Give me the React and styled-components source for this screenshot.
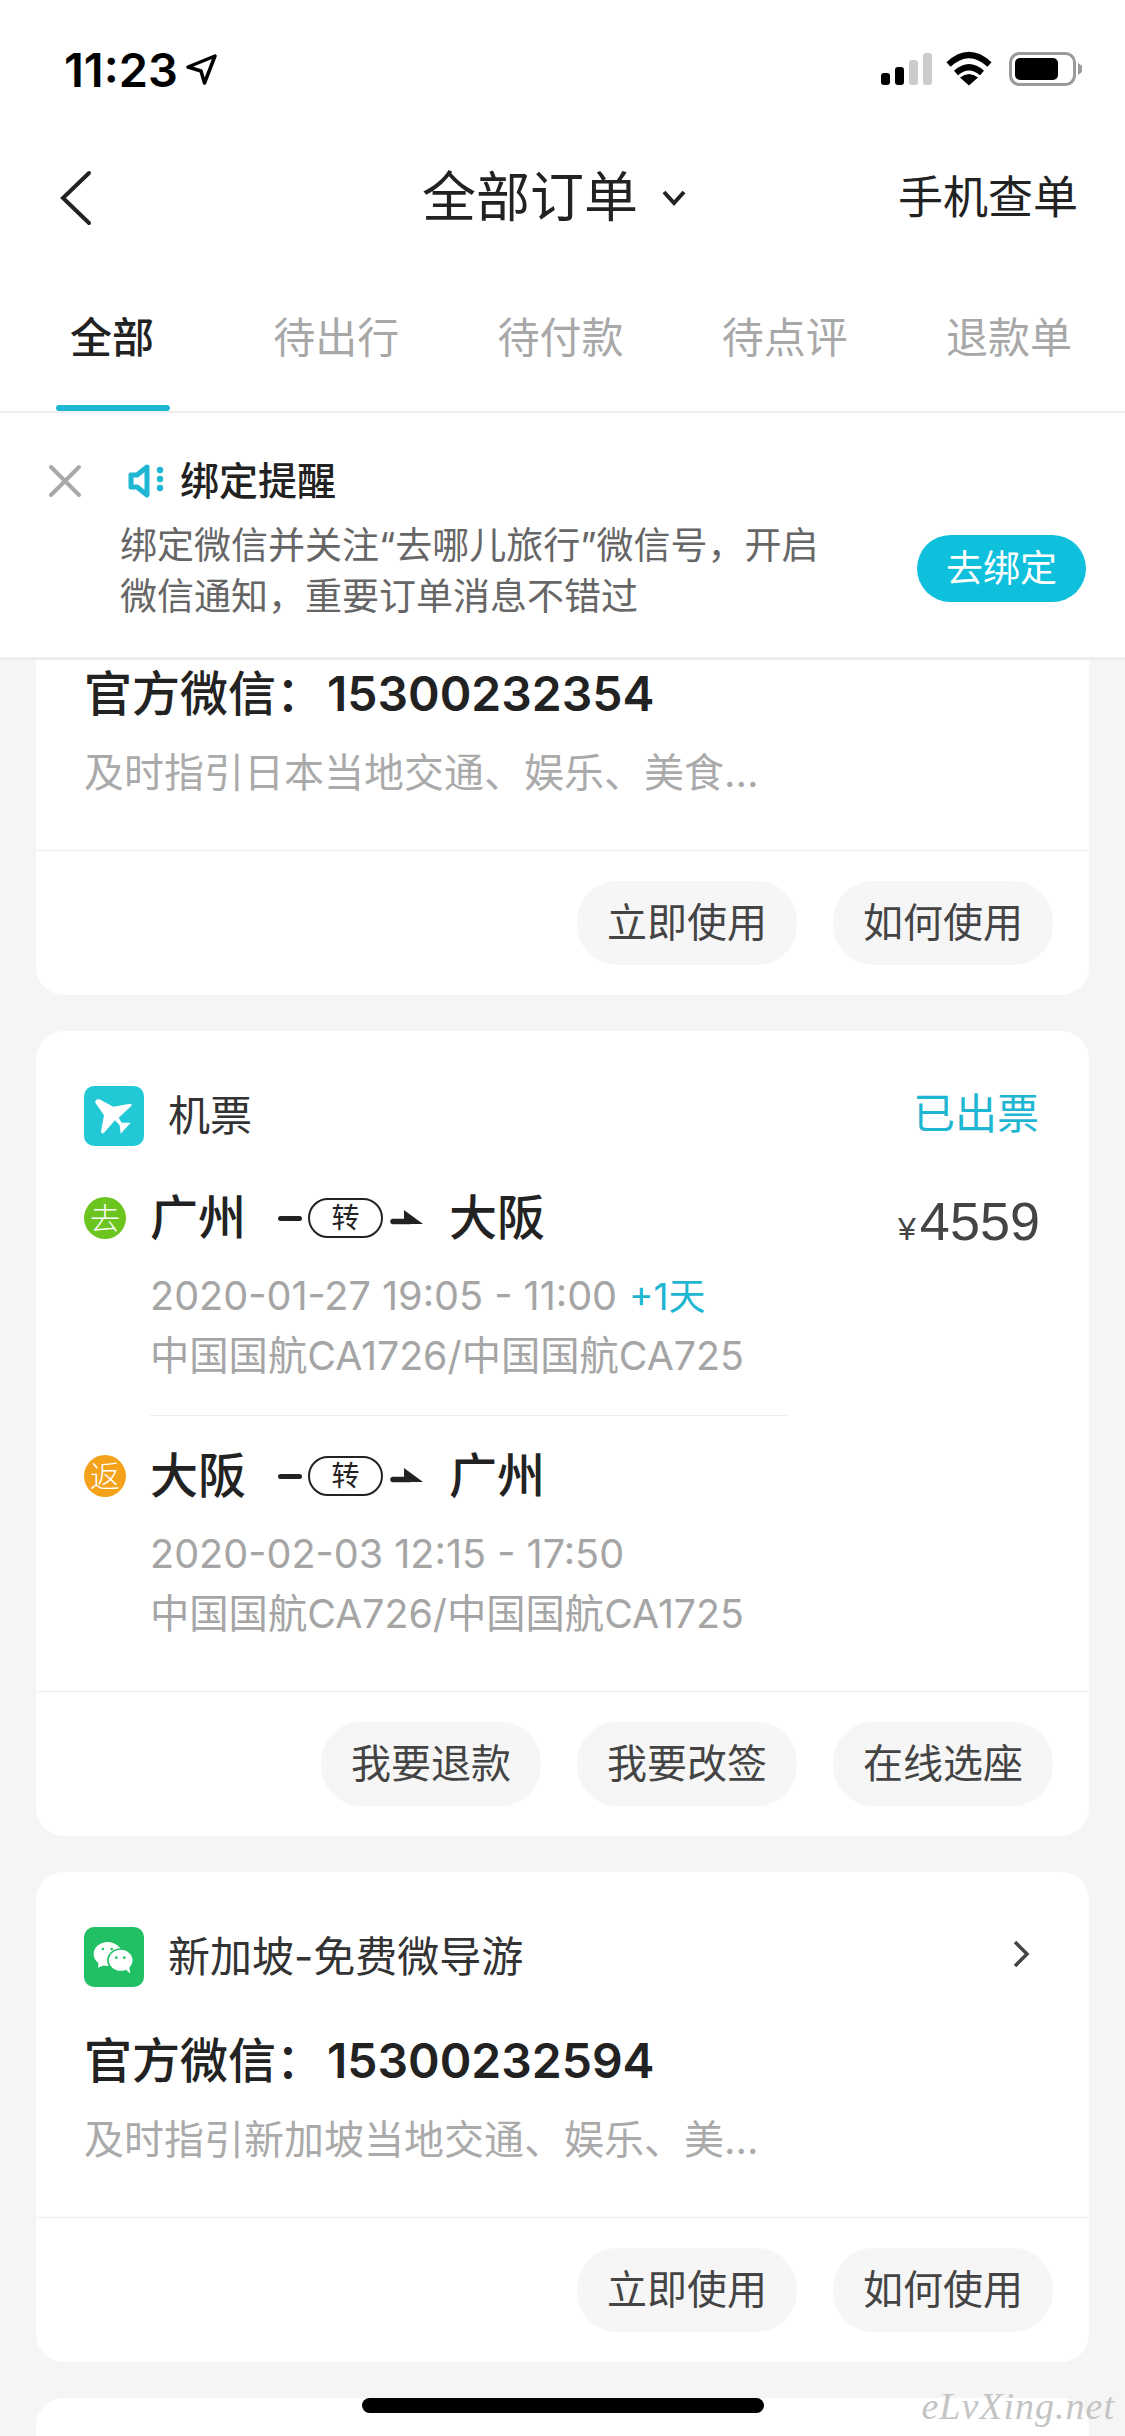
import React from 'react'
import styled, { createGlobalStyle } from 'styled-components'

const GlobalStyle = createGlobalStyle`
    html, body {
        margin: 0;
        padding: 0;
        background: #f5f5f5;
        font-family: Inter, "Noto Sans CJK SC", sans-serif;
    }
`

function SignalIcon() {
    return (
        <svg width="52" height="34" viewBox="881 52 52 34">
            <rect x="882" y="73" width="9" height="12" rx="3" fill="#000" />
            <rect x="896" y="67" width="9" height="18" rx="3" fill="#000" />
            <rect x="910" y="60" width="9" height="25" rx="3" fill="#ccc" />
            <rect x="924" y="53" width="9" height="32" rx="3" fill="#ccc" />
        </svg>
    )
}

function WifiIcon() {
    return (
        <svg width="48" height="38" viewBox="948 50 48 38">
            <path d="M950.500 64.500 Q971 45.500 991.500 64.500" fill="none" stroke="#000" strokeWidth="6" />
            <path d="M958 73 Q971 61.500 984 73" fill="none" stroke="#000" strokeWidth="6" />
            <path d="M971 85.500 L962 77.500 Q971 70.500 980 77.500 Z" fill="#000" />
        </svg>
    )
}

function BatteryIcon() {
    return (
        <svg width="75" height="36" viewBox="1008 51 75 36">
            <rect x="1010.500" y="53.500" width="64" height="31" rx="9" fill="none" stroke="#9a9a9a" strokeWidth="3" />
            <rect x="1015" y="58" width="43" height="22" rx="5" fill="#000" />
            <path d="M1078 63 L1082 66 V72 L1078 75 Z" fill="#9a9a9a" />
        </svg>
    )
}

function PlaneIcon() {
    return (
        <svg width="60" height="60" viewBox="12 12 180 180">
            <path d="M46 62 Q45 50 58 52 L100 74 L150 65 Q158 66 153 73 L116 107 L125 122 L152 122 L122 155 L119 130 L105 115 L72 152 Q64 158 63 148 L72 100 Z" fill="#fff" />
        </svg>
    )
}

function WechatIcon() {
    return (
        <svg width="60" height="60" viewBox="12 12 180 180">
            <ellipse cx="83" cy="93" rx="42" ry="36" fill="#fff" />
            <path d="M56 118 L54 134 L78 124 Z" fill="#fff" />
            <ellipse cx="122" cy="112" rx="38" ry="34" fill="#fff" stroke="#22c064" strokeWidth="5" />
            <path d="M136 138 L151 152 L147 130 Z" fill="#fff" />
            <circle cx="69" cy="78" r="4" fill="#22c064" />
            <circle cx="95" cy="78" r="4" fill="#22c064" />
            <circle cx="109" cy="104" r="4" fill="#22c064" />
            <circle cx="133" cy="104" r="4" fill="#22c064" />
        </svg>
    )
}

function TransferMark() {
    return (
        <Transfer>
            <TransferLine />
            <TransferPill>转</TransferPill>
            <svg width="34" height="18" viewBox="0 0 34 18">
                <path d="M3 12.500 H20" stroke="#222" strokeWidth="5.500" strokeLinecap="round" />
                <path d="M14 1 L33 15 H14 Z" fill="#222" />
            </svg>
        </Transfer>
    )
}

function FlightLeg({ badge, badgeColor, from, to, date, extra, carrier }) {
    return (
        <Leg>
            <Route>
                <Badge $color={badgeColor}>{badge}</Badge>
                <City>{from}</City>
                <TransferMark />
                <City>{to}</City>
            </Route>
            <LegDetail>
                <LegDate>{date}{extra && <NextDay>{extra}</NextDay>}</LegDate>
                <div>{carrier}</div>
            </LegDetail>
        </Leg>
    )
}

// the first card in the list is scrolled under the banner, so it comes without a title
function GuideCard({ title, number, desc }) {
    return (
        <Card $scrolled={!title}>
            {title && (
                <CardHead>
                    <IconTile $color="#22c064"><WechatIcon /></IconTile>
                    <CardTitle>{title}</CardTitle>
                    <CardArrow width="18" height="30" viewBox="0 0 18 30">
                        <path d="M3 3 L15 15 L3 27" fill="none" stroke="#444" strokeWidth="3.500" />
                    </CardArrow>
                </CardHead>
            )}
            <GuideNumber>官方微信：<span>{number}</span></GuideNumber>
            <GuideDesc>{desc}</GuideDesc>
            <CardFooter>
                <PillButton>立即使用</PillButton>
                <PillButton>如何使用</PillButton>
            </CardFooter>
        </Card>
    )
}

export default function App() {
    return (
        <Page>
            <GlobalStyle />
            <Header>
                <StatusBar>
                    <Clock>
                        11:23
                        <svg width="34" height="34" viewBox="184 53 34 34">
                            <path d="M215 57 L188 68 L201 72 L204.500 84 Z" fill="none" stroke="#000" strokeWidth="3.500" strokeLinejoin="round" />
                        </svg>
                    </Clock>
                    <StatusIcons>
                        <SignalIcon />
                        <WifiIcon />
                        <BatteryIcon />
                    </StatusIcons>
                </StatusBar>
                <NavBar>
                    <BackSlot>
                        <svg width="32" height="56" viewBox="0 0 32 56">
                            <path d="M29 3 L3 28 L29 53" fill="none" stroke="#222" strokeWidth="4" strokeLinecap="round" />
                        </svg>
                    </BackSlot>
                    <NavTitle>全部订单</NavTitle>
                    <svg width="24" height="16" viewBox="0 0 24 16">
                        <path d="M2 2 L12 13 L22 2" fill="none" stroke="#222" strokeWidth="4" />
                    </svg>
                    <NavAction>手机查单</NavAction>
                </NavBar>
                <Tabs>
                    <Tab $active>全部</Tab>
                    <Tab>待出行</Tab>
                    <Tab>待付款</Tab>
                    <Tab>待点评</Tab>
                    <Tab>退款单</Tab>
                </Tabs>
            </Header>

            <Notice>
                <NoticeHead>
                    <svg width="34" height="34" viewBox="0 0 34 34">
                        <path d="M3 3 L31 31 M31 3 L3 31" stroke="#a8a8a8" strokeWidth="4" strokeLinecap="round" />
                    </svg>
                    <svg width="38" height="36" viewBox="126 463 38 36">
                        <path d="M147 467 L137 475 H131 V487 H137 L147 495 Z" fill="none" stroke="#1eb6d2" strokeWidth="5" strokeLinejoin="round" />
                        <circle cx="160" cy="470" r="3.200" fill="#1eb6d2" />
                        <circle cx="160" cy="479" r="3.200" fill="#1eb6d2" />
                        <circle cx="160" cy="488" r="3.200" fill="#1eb6d2" />
                    </svg>
                    <NoticeTitle>绑定提醒</NoticeTitle>
                </NoticeHead>
                <NoticeBody>
                    <NoticeText>
                        绑定微信并关注“去哪儿旅行”微信号，开启<br />
                        微信通知，重要订单消息不错过
                    </NoticeText>
                    <BindButton>去绑定</BindButton>
                </NoticeBody>
            </Notice>

            <ListViewport>
                <List>
                    <GuideCard number="15300232354" desc="及时指引日本当地交通、娱乐、美食..." />

                    <Card>
                        <CardHead>
                            <IconTile $color="#22c8d6"><PlaneIcon /></IconTile>
                            <CardTitle>机票</CardTitle>
                            <TicketStatus>已出票</TicketStatus>
                        </CardHead>
                        <FlightBody>
                            <Legs>
                                <FlightLeg
                                    badge="去"
                                    badgeColor="#6cc51f"
                                    from="广州"
                                    to="大阪"
                                    date="2020-01-27 19:05 - 11:00"
                                    extra="+1天"
                                    carrier="中国国航CA1726/中国国航CA725"
                                />
                                <LegDivider />
                                <FlightLeg
                                    badge="返"
                                    badgeColor="#f5a21b"
                                    from="大阪"
                                    to="广州"
                                    date="2020-02-03 12:15 - 17:50"
                                    carrier="中国国航CA726/中国国航CA1725"
                                />
                            </Legs>
                            <Price><small>¥</small>4559</Price>
                        </FlightBody>
                        <CardFooter>
                            <PillButton>我要退款</PillButton>
                            <PillButton>我要改签</PillButton>
                            <PillButton>在线选座</PillButton>
                        </CardFooter>
                    </Card>

                    <GuideCard title="新加坡-免费微导游" number="15300232594" desc="及时指引新加坡当地交通、娱乐、美..." />
                    <EmptyCard />
                </List>
            </ListViewport>

            <HomeBar />
            <Watermark>eLvXing.net</Watermark>
        </Page>
    )
}

const Page = styled.div`
    position: relative;
    width: 1125px;
    height: 2436px;
    overflow: hidden;
    display: flex;
    flex-direction: column;
    background: #f5f5f5;
    color: #222;
`

const Header = styled.header`
    background: #fff;
    border-bottom: 2px solid #eee;
`

const StatusBar = styled.div`
    height: 138px;
    display: flex;
    align-items: center;
    justify-content: space-between;
    padding: 0 42px 0 64px;
`

const Clock = styled.div`
    display: flex;
    align-items: center;
    gap: 6px;
    font-size: 47px;
    font-weight: 600;
    color: #000;
`

const StatusIcons = styled.div`
    display: flex;
    align-items: center;
    gap: 14px;
`

const NavBar = styled.nav`
    height: 120px;
    display: flex;
    align-items: center;
    padding: 0 47px 0 60px;
`

const BackSlot = styled.div`
    width: 362px;
    display: flex;
`

const NavTitle = styled.h1`
    margin: 0 24px 0 0;
    font-size: 54px;
    font-weight: 400;
    line-height: 70px;
`

const NavAction = styled.div`
    margin-left: auto;
    font-size: 45px;
    line-height: 60px;
`

const Tabs = styled.div`
    height: 153px;
    display: flex;
    padding-right: 4px;
`

const Tab = styled.div`
    position: relative;
    flex: 1;
    padding-top: 52px;
    text-align: center;
    font-size: 42px;
    line-height: 56px;
    font-weight: ${props => (props.$active ? 500 : 400)};
    color: ${props => (props.$active ? '#222' : '#a8a8a8')};

    &::after {
        content: '';
        display: ${props => (props.$active ? 'block' : 'none')};
        position: absolute;
        left: 56px;
        bottom: 0;
        width: 114px;
        height: 6px;
        border-radius: 3px;
        background: #1eb6d2;
    }
`

const Notice = styled.section`
    height: 244px;
    padding: 0 39px 0 48px;
    background: #fff;
    border-bottom: 3px solid #eee;
`

const NoticeHead = styled.div`
    display: flex;
    align-items: center;
    height: 50px;
    padding-top: 43px;

    svg:first-child {
        margin-right: 44px;
    }
`

const NoticeTitle = styled.div`
    margin-left: 16px;
    font-size: 39px;
    font-weight: 500;
    line-height: 50px;
`

const NoticeBody = styled.div`
    display: flex;
    align-items: center;
    justify-content: space-between;
    margin-top: 14px;
    padding-left: 72px;
`

const NoticeText = styled.div`
    font-size: 37px;
    line-height: 51px;
    color: #666;
`

const BindButton = styled.div`
    width: 169px;
    height: 67px;
    margin-bottom: 6px;
    border-radius: 34px;
    background: #0fc0dd;
    color: #fff;
    font-size: 37px;
    line-height: 67px;
    text-align: center;
`

const ListViewport = styled.main`
    flex: 1;
    min-height: 0;
    overflow: hidden;
`

const List = styled.div`
    margin: 0 36px;
    display: flex;
    flex-direction: column;
    gap: 36px;
`

const Card = styled.article`
    background: #fff;
    border-radius: ${props => (props.$scrolled ? '0 0 28px 28px' : '28px')};
    padding-top: ${props => (props.$scrolled ? '4px' : '55px')};
`

const EmptyCard = styled(Card)`
    height: 300px;
    flex: none;
`

const CardHead = styled.div`
    display: flex;
    align-items: center;
    height: 60px;
    margin-bottom: 44px;
    padding: 0 50px 0 48px;
`

const IconTile = styled.div`
    width: 60px;
    height: 60px;
    border-radius: 10px;
    overflow: hidden;
    background: ${props => props.$color};
`

const CardTitle = styled.div`
    margin-left: 24px;
    font-size: 42px;
    line-height: 60px;
    color: #333;
`

const CardArrow = styled.svg`
    margin-left: auto;
    margin-right: 9px;
    margin-bottom: 6px;
`

const TicketStatus = styled.div`
    margin-left: auto;
    margin-bottom: 4px;
    font-size: 42px;
    line-height: 60px;
    color: #1eb6d2;
`

const GuideNumber = styled.div`
    margin: 0 48px;
    font-size: 48px;
    line-height: 60px;
    font-weight: 500;

    span {
        margin-left: 3px;
        font-weight: 600;
    }
`

const GuideDesc = styled.div`
    margin: 24px 48px 52px;
    font-size: 40px;
    line-height: 50px;
    color: #aaa;
`

const CardFooter = styled.div`
    display: flex;
    justify-content: flex-end;
    gap: 36px;
    padding: 30px 36px 30px 0;
    border-top: 1px solid #eee;
`

const PillButton = styled.div`
    width: 220px;
    height: 84px;
    border-radius: 40px;
    background: #f6f6f6;
    color: #444;
    font-size: 40px;
    line-height: 84px;
    text-align: center;
`

const FlightBody = styled.div`
    display: flex;
    padding: 7px 49px 48px 48px;
`

const Legs = styled.div`
    width: 703px;
`

const Leg = styled.div``

const Route = styled.div`
    display: flex;
    align-items: center;
    height: 42px;
`

const Badge = styled.div`
    flex: none;
    width: 42px;
    height: 42px;
    margin-right: 24px;
    border-radius: 50%;
    background: ${props => props.$color};
    color: #fff;
    font-size: 30px;
    line-height: 42px;
    text-align: center;
    font-weight: 300;
`

const City = styled.div`
    width: 96px;
    font-size: 48px;
    line-height: 42px;
    font-weight: 500;
`

const Transfer = styled.div`
    display: flex;
    align-items: center;
    margin: 0 25px 0 32px;
`

const TransferLine = styled.div`
    width: 24px;
    height: 5px;
    margin-right: 6px;
    border-radius: 3px;
    background: #222;
`

const TransferPill = styled.div`
    box-sizing: border-box;
    width: 75px;
    height: 40px;
    margin-right: 7px;
    border: 2px solid #222;
    border-radius: 20px;
    font-size: 28px;
    line-height: 36px;
    text-align: center;
`

const LegDetail = styled.div`
    margin-top: 28px;
    padding-left: 66px;
    font-size: 39.300px;
    line-height: 59px;
    color: #a5a5a5;
`

const LegDate = styled.div`
    font-size: 39.600px;
`

const NextDay = styled.span`
    margin-left: 12px;
    font-size: 37px;
    color: #1eb6d2;
`

const LegDivider = styled.div`
    height: 1px;
    margin: 30px 0 39px 66px;
    background: #eee;
`

const Price = styled.div`
    margin-left: auto;
    margin-top: -3px;
    font-family: "Liberation Sans", "Noto Sans CJK SC", sans-serif;
    font-size: 54px;
    line-height: 54px;
    color: #444;

    small {
        margin-right: 4px;
        font-size: 32px;
    }
`

const HomeBar = styled.div`
    position: absolute;
    left: 362px;
    bottom: 23px;
    width: 402px;
    height: 15px;
    border-radius: 8px;
    background: #000;
`

const Watermark = styled.div`
    position: absolute;
    right: 10px;
    bottom: 8px;
    font-family: "Liberation Serif", "DejaVu Serif", serif;
    font-style: italic;
    font-size: 38px;
    letter-spacing: 1px;
    color: #c4c4c4;
`
